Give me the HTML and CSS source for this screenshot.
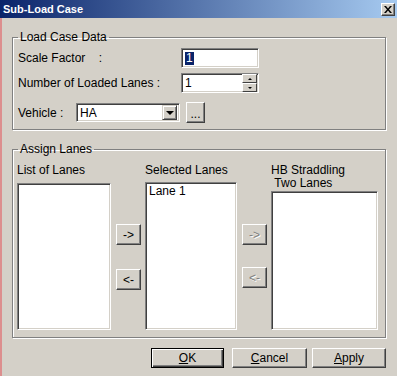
FILE: index.html
```html
<!DOCTYPE html>
<html>
    <head>
        <title>Sub-Load Case</title>
        <meta name="viewport" content="width=device-width, initial-scale=1.0">
        <link rel="stylesheet" href="styles.css">
    </head>
    <body>
        <div class="window">
            <div class="titlebar">
                <span class="title">Sub-Load Case</span>
                <span class="close">
                    <svg width="8" height="7" viewBox="0 0 8 7">
                        <path d="M0 0h2l2 2.5L6 0h2L5 3.5 8 7H6L4 4.5 2 7H0l3-3.5z" fill="#000"/>
                    </svg>
                </span>
            </div>

            <div class="dialog">
                <fieldset class="group group-data">
                    <legend>Load Case Data</legend>

                    <div class="row">
                        <label class="field-label wide">Scale Factor&nbsp;&nbsp;&nbsp;&nbsp;:</label>
                        <div class="edit"><span class="selected-text">1</span></div>
                    </div>

                    <div class="row">
                        <label class="field-label wide">Number of Loaded Lanes :</label>
                        <div class="edit">
                            <span>1</span>
                            <div class="spin-btns">
                                <span class="spin-btn"><i class="tri up"></i></span>
                                <span class="spin-btn"><i class="tri down"></i></span>
                            </div>
                        </div>
                    </div>

                    <div class="row row-vehicle">
                        <label class="field-label short">Vehicle :</label>
                        <div class="combo">
                            <span>HA</span>
                            <span class="combo-btn"><i class="tri big-down"></i></span>
                        </div>
                        <button class="btn dots">...</button>
                    </div>
                </fieldset>

                <fieldset class="group group-lanes">
                    <legend>Assign Lanes</legend>

                    <div class="lanes">
                        <div class="lane-col col-list">
                            <div class="lane-label">List of Lanes</div>
                            <div class="listbox"></div>
                        </div>

                        <div class="arrows">
                            <button class="btn arrow">-&gt;</button>
                            <button class="btn arrow second">&lt;-</button>
                        </div>

                        <div class="lane-col col-selected">
                            <div class="lane-label">Selected Lanes</div>
                            <div class="listbox">
                                <div class="list-item">Lane 1</div>
                            </div>
                        </div>

                        <div class="arrows">
                            <button class="btn arrow disabled">-&gt;</button>
                            <button class="btn arrow disabled second-hb">&lt;-</button>
                        </div>

                        <div class="lane-col col-hb">
                            <div class="lane-label">HB Straddling<br>&nbsp;Two Lanes</div>
                            <div class="listbox"></div>
                        </div>
                    </div>
                </fieldset>

                <div class="actions">
                    <button class="btn action default-btn"><u>O</u>K</button>
                    <button class="btn action cancel-btn"><u>C</u>ancel</button>
                    <button class="btn action apply-btn"><u>A</u>pply</button>
                </div>
            </div>
        </div>
    </body>
</html>
```
FILE: styles.css
```css
*{
    margin: 0;
    padding: 0;
    box-sizing: border-box;
}

body{
    width: 397px;
    height: 376px;
    overflow: hidden;
    background-color: #d4d0c8;
}

.window{
    width: 397px;
    height: 376px;
    background-color: #d4d0c8;
    font-family: "Liberation Sans", Arial, sans-serif;
    font-size: 12px;
    color: #000;
}

/* title bar */
.titlebar{
    height: 18px;
    display: flex;
    align-items: center;
    justify-content: space-between;
    padding: 0 2px 0 3px;
    background: linear-gradient(to right, #0a246a, #a6caf0);
}

.title{
    color: #fff;
    font-weight: bold;
    font-size: 11px;
}

.close{
    width: 14px;
    height: 13px;
    display: flex;
    align-items: center;
    justify-content: center;
    background-color: #d4d0c8;
    border: 1px solid;
    border-color: #fff #404040 #404040 #fff;
    box-shadow: inset -1px -1px #808080;
}

.dialog{
    height: 358px;
    border-left: 2px solid #dc8e8e;
    padding: 12px 11px 0 10px;
}

/* group boxes */
.group{
    border: 1px solid #808080;
    box-shadow: inset 1px 1px #fff, 1px 1px #fff;
    padding: 4px 5px 6px 5px;
}

.group legend{
    padding: 0 2px;
    line-height: 14px;
}

.group-lanes{
    margin-top: 12px;
    padding-top: 8px;
    padding-bottom: 7px;
}

.row{
    display: flex;
    align-items: center;
    height: 20px;
}

.row + .row{
    margin-top: 5px;
}

.row-vehicle{
    height: 21px;
    margin-top: 9px !important;
}

.field-label.wide{
    width: 163px;
}

.field-label.short{
    width: 58px;
}

/* sunken fields */
.edit, .combo, .listbox{
    background-color: #fff;
    border: 1px solid;
    border-color: #808080 #fff #fff #808080;
    box-shadow: inset 1px 1px #404040, inset -1px -1px #d4d0c8;
}

.edit{
    width: 78px;
    height: 20px;
    display: flex;
    align-items: center;
    padding: 0 1px 0 3px;
}

.selected-text{
    background-color: #0a246a;
    color: #fff;
    padding: 0 1px;
    line-height: 13px;
}

.spin-btns{
    margin-left: auto;
    width: 15px;
    height: 18px;
    display: flex;
    flex-direction: column;
}

.spin-btn{
    flex: 1;
    display: flex;
    align-items: center;
    justify-content: center;
    background-color: #d4d0c8;
    border: 1px solid;
    border-color: #fff #404040 #404040 #fff;
}

.tri{
    width: 0;
    height: 0;
    border-left: 2px solid transparent;
    border-right: 2px solid transparent;
}

.tri.up{
    border-bottom: 2px solid #000;
}

.tri.down{
    border-top: 2px solid #000;
}

.tri.big-down{
    border-left-width: 4px;
    border-right-width: 4px;
    border-top: 4px solid #000;
}

.combo{
    width: 104px;
    height: 19px;
    display: flex;
    align-items: center;
    padding: 0 2px 0 3px;
}

.combo-btn{
    margin-left: auto;
    width: 15px;
    height: 15px;
    display: flex;
    align-items: center;
    justify-content: center;
    background-color: #d4d0c8;
    border: 1px solid;
    border-color: #d4d0c8 #404040 #404040 #d4d0c8;
    box-shadow: inset 1px 1px #fff, inset -1px -1px #808080;
}

/* buttons */
.btn{
    font: inherit;
    color: #000;
    background-color: #d4d0c8;
    border: 1px solid;
    border-color: #fff #404040 #404040 #fff;
    box-shadow: inset -1px -1px #808080;
}

.dots{
    width: 19px;
    height: 21px;
    margin-left: 6px;
    padding-top: 3px;
}

.lanes{
    display: flex;
    height: 166px;
    margin-left: -1px;
}

.lane-col{
    display: flex;
    flex-direction: column;
}

.col-list{
    width: 94px;
}

.col-selected{
    width: 92px;
}

.col-hb{
    width: 107px;
}

.lane-label{
    line-height: 13px;
    margin-bottom: 6px;
}

.col-selected .lane-label{
    margin-bottom: 5px;
}

.col-hb .lane-label{
    margin-bottom: 1px;
}

.listbox{
    flex: 1;
    padding: 2px 3px;
}

.list-item{
    line-height: 12px;
}

.arrows{
    width: 25px;
    margin: 0 4px 0 5px;
    display: flex;
    flex-direction: column;
    padding-top: 60px;
}

.arrow{
    height: 21px;
}

.arrow.second{
    margin-top: 24px;
}

.arrow.second-hb{
    margin-top: 22px;
}

.disabled{
    color: #808080;
    text-shadow: 1px 1px #fff;
}

.actions{
    display: flex;
    justify-content: flex-end;
    margin-top: 10px;
}

.action{
    height: 20px;
}

.default-btn{
    width: 73px;
    border-color: #000;
    box-shadow: inset 1px 1px #fff, inset -1px -1px #404040, inset -2px -2px #808080;
}

.cancel-btn{
    width: 75px;
    margin-left: 8px;
}

.apply-btn{
    width: 74px;
    margin-left: 5px;
}
```
